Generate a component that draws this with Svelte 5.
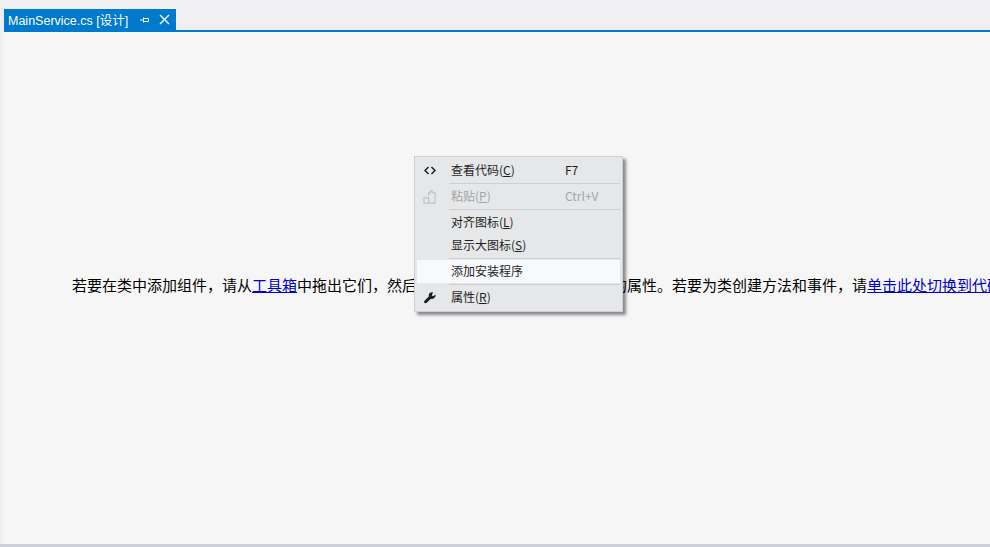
<script lang="ts">
	type Item = { label: string; key?: string; shortcut?: string; icon?: string; disabled?: boolean; active?: boolean };

	const groups: Item[][] = [
		[{ label: '查看代码(', key: 'C', shortcut: 'F7', icon: 'code' }],
		[{ label: '粘贴(', key: 'P', shortcut: 'Ctrl+V', icon: 'paste', disabled: true }],
		[
			{ label: '对齐图标(', key: 'L' },
			{ label: '显示大图标(', key: 'S' }
		],
		[{ label: '添加安装程序', active: true }],
		[{ label: '属性(', key: 'R', icon: 'wrench' }]
	];
</script>

<div class="ide">
	<div class="tabstrip">
		<div class="tab">
			<span class="tab__title">MainService.cs [设计]</span>
			<svg class="tab__pin" width="10" height="10" viewBox="0 0 10 10">
				<path d="M0 5h3M3.500 2.500v5M3.500 3.500h5v3h-5" fill="none" stroke="#fff" stroke-width="1" />
			</svg>
			<svg class="tab__close" width="11" height="11" viewBox="0 0 11 11">
				<path d="M1 1l9 9M10 1l-9 9" fill="none" stroke="#fff" stroke-width="1.4" />
			</svg>
		</div>
	</div>
	<div class="surface">
		<p class="hint">若要在类中添加组件，请从<a href="#toolbox">工具箱</a>中拖出它们，然后使用“属性”窗口来设置它们的属性。若要为类创建方法和事件，请<a href="#code">单击此处切换到代码视图</a>。</p>
	</div>
	<div class="statusline"></div>

	<div class="menu">
		{#each groups as group, g}
			{#if g > 0}<div class="menu__sep"></div>{/if}
			{#each group as item}
				<div class="menu__item" class:disabled={item.disabled} class:active={item.active}>
					<span class="menu__icon">
						{#if item.icon === 'code'}
							<svg width="12" height="9" viewBox="0 0 12 9">
								<path d="M4.500 1L1 4.500 4.500 8M7.500 1L11 4.500 7.500 8" fill="none" stroke="#1e1e1e" stroke-width="1.500" />
							</svg>
						{:else if item.icon === 'paste'}
							<svg width="14" height="14" viewBox="0 0 15 15">
								<path d="M1 8.500h5v5.500H1zM6 6V3h2V1h2v2h3v11H6" fill="none" stroke="#bfc0c3" stroke-width="1.200" />
							</svg>
						{:else if item.icon === 'wrench'}
							<svg width="12" height="12" viewBox="0 0 13 13">
								<path d="M12.600 2.600L10 4.600 8.400 3.600 9.800.6C7.800-.2 5.400 1 5.200 3.200c0 .5 0 1 .2 1.400L.6 9.400c-.7.8-.6 1.800 0 2.400.7.6 1.600.6 2.300-.1l4.600-4.400c2.800 1 5.600-1.400 5.100-4.700z" fill="#1e1e1e" />
							</svg>
						{/if}
					</span>
					<span class="menu__label">{item.label}{#if item.key}<u>{item.key}</u>){/if}</span>
					{#if item.shortcut}<span class="menu__shortcut">{item.shortcut}</span>{/if}
				</div>
			{/each}
		{/each}
	</div>
</div>

<style>
	:global(body) {
		margin: 0;
		background: #f0f0f2;
	}

	.ide {
		position: relative;
		width: 990px;
		height: 547px;
		display: flex;
		flex-direction: column;
		overflow: hidden;
		background: #f0f0f2;
		font-family: "Liberation Sans", "Noto Sans CJK SC", sans-serif;
	}

	.tabstrip {
		flex: none;
		height: 32px;
		box-sizing: border-box;
		margin-left: 4px;
		padding-top: 9px;
		border-bottom: 2px solid #007acc;
		display: flex;
	}

	.tab {
		width: 172px;
		height: 21px;
		box-sizing: border-box;
		padding-left: 4px;
		display: flex;
		align-items: center;
		background: #007acc;
		color: #fff;
		font-size: 12.5px;
		white-space: nowrap;
	}

	.tab__title {
		width: 132px;
		flex: none;
	}

	.tab__pin {
		flex: none;
	}

	.tab__close {
		flex: none;
		margin-left: 9px;
	}

	.surface {
		flex: 1;
		margin-left: 3px;
		background: #f6f6f6;
		overflow: hidden;
		padding: 243px 0 0 69px;
		min-height: 0;
	}

	.hint {
		margin: 0;
		font-family: "Noto Sans CJK SC", sans-serif;
		font-size: 15px;
		line-height: 20px;
		color: #000;
		white-space: nowrap;
	}

	.hint a {
		color: #0000cc;
		text-decoration: underline;
	}

	.statusline {
		flex: none;
		height: 3px;
		background: #ccced8;
	}

	.menu {
		position: absolute;
		left: 414px;
		top: 156px;
		width: 209px;
		height: 156px;
		box-sizing: border-box;
		padding: 2px;
		background: #e6e7e8;
		border: 1px solid #cccedb;
		box-shadow: 3px 3px 3px rgba(0, 0, 0, 0.45);
		font-family: "Noto Sans CJK SC", sans-serif;
		font-size: 12px;
		color: #1e1e1e;
	}

	.menu__item {
		height: 23px;
		display: flex;
		align-items: center;
	}

	.menu__item.disabled {
		color: #a2a4a5;
	}

	.menu__item.active {
		background: #f8f9fb;
	}

	.menu__icon {
		width: 34px;
		flex: none;
		display: flex;
		justify-content: center;
		align-items: center;
		padding-right: 8px;
		box-sizing: border-box;
	}

	.menu__label {
		width: 114px;
		flex: none;
		padding-bottom: 2px;
	}

	.menu__shortcut {
		padding-bottom: 2px;
	}

	.menu__sep {
		height: 1px;
		margin: 1px 0 1px 32px;
		background: #ccced3;
	}
</style>
